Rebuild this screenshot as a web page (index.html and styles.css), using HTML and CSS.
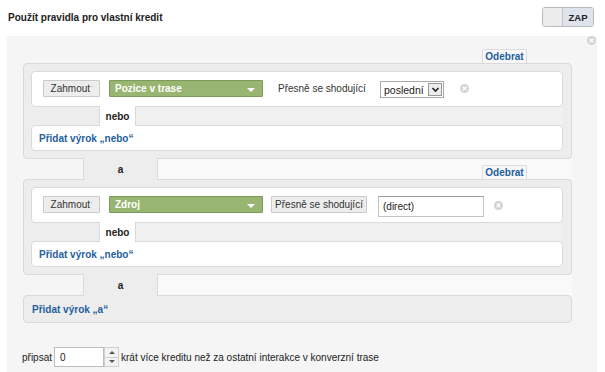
FILE: index.html
```html
<!DOCTYPE html>
<html lang="cs">
<head>
<meta charset="utf-8">
<link rel="stylesheet" href="styles.css">
</head>
<body>
<div class="header">
  <div class="title">Použít pravidla pro vlastní kredit</div>
  <div class="toggle"><span class="toggle-off"></span><span class="toggle-on">ZAP</span></div>
</div>
<div class="panel">
  <span class="panel-close"><svg width="9" height="9" viewBox="0 0 9 9"><circle cx="4.5" cy="4.5" r="4.5" fill="#d4d4d4"/><path d="M2.8 2.8L6.2 6.2M6.2 2.8L2.8 6.2" stroke="#fff" stroke-width="1.3"/></svg></span>

  <div class="tab-line"><span class="remove-tab">Odebrat</span></div>
  <div class="group">
    <div class="row">
      <span class="btn btn-inc">Zahmout<span class="tick">'</span></span>
      <span class="green-select">Pozice v trase<span class="caret"></span></span>
      <span class="label">Přesně se shodující</span>
      <span class="native-select">poslední<span class="sel-arrow"><svg width="9" height="7" viewBox="0 0 9 7"><path d="M1.5 2L4.5 5L7.5 2" fill="none" stroke="#222" stroke-width="1.6"/></svg></span></span>
      <span class="x-icon"><svg width="9" height="9" viewBox="0 0 9 9"><circle cx="4.5" cy="4.5" r="4.5" fill="#d4d4d4"/><path d="M2.8 2.8L6.2 6.2M6.2 2.8L2.8 6.2" stroke="#fff" stroke-width="1.3"/></svg></span>
    </div>
    <div class="or-sep"><span class="or-space"></span><span class="or-tab">nebo</span><span class="or-fill"></span></div>
    <div class="row-add"><a class="link">Přidat výrok „nebo“</a></div>
  </div>

  <div class="and-sep">
    <span class="and-space"></span><span class="and-tab">a</span>
    <span class="and-fill"><span class="remove-tab">Odebrat</span></span>
  </div>
  <div class="group">
    <div class="row">
      <span class="btn btn-inc">Zahmout<span class="tick">'</span></span>
      <span class="green-select">Zdroj<span class="caret"></span></span>
      <span class="btn btn-match">Přesně se shodující</span>
      <span class="text-input">(direct)</span>
      <span class="x-icon x2"><svg width="9" height="9" viewBox="0 0 9 9"><circle cx="4.5" cy="4.5" r="4.5" fill="#d4d4d4"/><path d="M2.8 2.8L6.2 6.2M6.2 2.8L2.8 6.2" stroke="#fff" stroke-width="1.3"/></svg></span>
    </div>
    <div class="or-sep"><span class="or-space"></span><span class="or-tab">nebo</span><span class="or-fill"></span></div>
    <div class="row-add"><a class="link">Přidat výrok „nebo“</a></div>
  </div>

  <div class="and-sep">
    <span class="and-space"></span><span class="and-tab">a</span>
    <span class="and-fill"></span>
  </div>
  <div class="add-and"><a class="link">Přidat výrok „a“</a></div>

  <div class="credit">
    <span>připsat</span>
    <span class="num-input">0</span>
    <span class="spinner"><span class="up"></span><span class="down"></span></span>
    <span>krát více kreditu než za ostatní interakce v konverzní trase</span>
  </div>
</div>
</body>
</html>
```

FILE: styles.css
```css
* { box-sizing: border-box; }
html, body { margin: 0; padding: 0; background: #fff; }
body {
  font-family: "Liberation Sans", Arial, sans-serif;
  font-size: 10px;
  color: #222;
  width: 605px;
  height: 372px;
  overflow: hidden;
}
.header {
  display: flex;
  justify-content: space-between;
  align-items: center;
  height: 34px;
  padding: 0 11px 0 8px;
}
.title { font-weight: bold; font-size: 10px; color: #222; }
.toggle {
  display: flex;
  height: 20px;
  border: 1px solid #b9b9b9;
  border-radius: 3px;
  overflow: hidden;
}
.toggle-off { width: 20px; background: #ececec; border-right: 1px solid #c4c4c4; }
.toggle-on {
  width: 30px;
  background: #dfe4ec;
  font-weight: bold;
  font-size: 9.5px;
  display: flex;
  align-items: center;
  justify-content: center;
  color: #222;
}
.panel {
  position: relative;
  margin: 2px 8px 0 7px;
  background: #f5f5f5;
  padding: 13px 25px 0 16px;
  height: 336px;
}
.panel-close { position: absolute; top: 0; right: 1px; line-height: 0; }
.tab-line {
  display: flex;
  justify-content: flex-end;
  padding-right: 45px;
}
.remove-tab {
  display: inline-flex;
  align-items: center;
  justify-content: center;
  width: 45px;
  height: 14px;
  background: #f7f7f7;
  border: 1px solid #dcdcdc;
  border-bottom: none;
  border-radius: 2px 2px 0 0;
  color: #1f5f9e;
  font-weight: bold;
  font-size: 10px;
}
.group {
  background: #ededed;
  border: 1px solid #dadada;
  border-radius: 4px;
  padding: 7px 8px 7px 7px;
}
.row {
  display: flex;
  align-items: center;
  height: 36px;
  background: #fff;
  border: 1px solid #dadada;
  border-radius: 4px;
  padding: 0 0 2px 11px;
}
.btn {
  display: inline-flex;
  align-items: center;
  justify-content: center;
  height: 17px;
  background: #ededed;
  border: 1px solid #c9c9c9;
  color: #333;
  font-size: 10px;
  border-radius: 1px;
}
.btn-inc { width: 57px; }
.btn .tick { color: #aaa; font-size: 7px; margin-left: 1px; }
.green-select {
  position: relative;
  display: inline-flex;
  align-items: center;
  width: 154px;
  height: 17px;
  margin-left: 9px;
  padding-left: 5px;
  background: #98b572;
  border: 1px solid #7d9a5a;
  border-radius: 1px;
  color: #fff;
  font-weight: bold;
}
.caret {
  position: absolute;
  right: 7px;
  top: 7px;
  border-left: 4px solid transparent;
  border-right: 4px solid transparent;
  border-top: 4px solid #fff;
}
.label { margin-left: 15px; color: #333; width: 102px; }
.native-select {
  display: inline-flex;
  align-items: center;
  justify-content: space-between;
  width: 64px;
  height: 17px;
  margin-top: 3px;
  padding-left: 3px;
  border: 1px solid #a9a9a9;
  background: #fff;
  color: #222;
  font-size: 10.5px;
}
.sel-arrow {
  display: flex;
  align-items: center;
  justify-content: center;
  width: 14px;
  height: 13px;
  margin-right: 1px;
  border: 1px solid #999;
  background: #ececec;
}
.x-icon { margin-left: 16px; line-height: 0; margin-top: 1px; }
.btn-match { margin-left: 8px; width: 96px; }
.text-input {
  display: inline-flex;
  align-items: center;
  width: 106px;
  height: 21px;
  margin-left: 11px;
  margin-top: 4px;
  padding-left: 4px;
  border: 1px solid #c4c4c4;
  border-top-color: #9e9e9e;
  background: #fff;
  color: #222;
}
.x2 { margin-left: 10px; margin-top: 3px; }
.or-sep { display: flex; height: 18px; }
.or-space { width: 68px; }
.or-tab {
  width: 37px;
  background: #fff;
  border-left: 1px solid #dadada;
  border-right: 1px solid #dadada;
  margin-top: -1px;
  margin-bottom: -1px;
  position: relative;
  z-index: 1;
  display: flex;
  align-items: center;
  justify-content: center;
  font-weight: bold;
  color: #222;
}
.or-fill { flex: 1; background: #f0f0f0; }
.row-add {
  display: flex;
  align-items: center;
  height: 26px;
  background: #fff;
  border: 1px solid #dadada;
  border-radius: 4px;
  padding-left: 7px;
}
.link { color: #1f5f9e; font-weight: bold; font-size: 10px; }
.and-sep { display: flex; height: 20px; }
.and-space { width: 60px; }
.and-tab {
  width: 75px;
  background: #ededed;
  border-left: 1px solid #dadada;
  border-right: 1px solid #dadada;
  margin-top: -1px;
  margin-bottom: -1px;
  position: relative;
  z-index: 1;
  display: flex;
  align-items: center;
  justify-content: center;
  font-weight: bold;
  color: #222;
}
.and-fill {
  flex: 1;
  display: flex;
  justify-content: flex-end;
  align-items: flex-end;
  padding-right: 45px;
  background: #f9f9f9;
}
.add-and {
  display: flex;
  align-items: center;
  height: 28px;
  background: #ededed;
  border: 1px solid #dadada;
  border-radius: 4px;
  padding-left: 8px;
}
.credit {
  display: flex;
  align-items: center;
  margin-top: 24px;
  margin-left: -1px;
  color: #222;
  font-size: 10px;
}
.num-input {
  display: inline-flex;
  align-items: center;
  width: 50px;
  height: 20px;
  margin-left: 2px;
  padding-left: 5px;
  border: 1px solid #bdbdbd;
  background: #fff;
}
.spinner {
  display: flex;
  flex-direction: column;
  width: 15px;
  height: 20px;
  margin-right: 2px;
}
.spinner span {
  flex: 1;
  display: flex;
  align-items: center;
  justify-content: center;
  background: #f3f3f3;
  border: 1px solid #d0d0d0;
}
.spinner .down { border-top: none; }
.spinner .up::after {
  content: "";
  border-left: 3px solid transparent;
  border-right: 3px solid transparent;
  border-bottom: 3px solid #555;
}
.spinner .down::after {
  content: "";
  border-left: 3px solid transparent;
  border-right: 3px solid transparent;
  border-top: 3px solid #555;
}
```
